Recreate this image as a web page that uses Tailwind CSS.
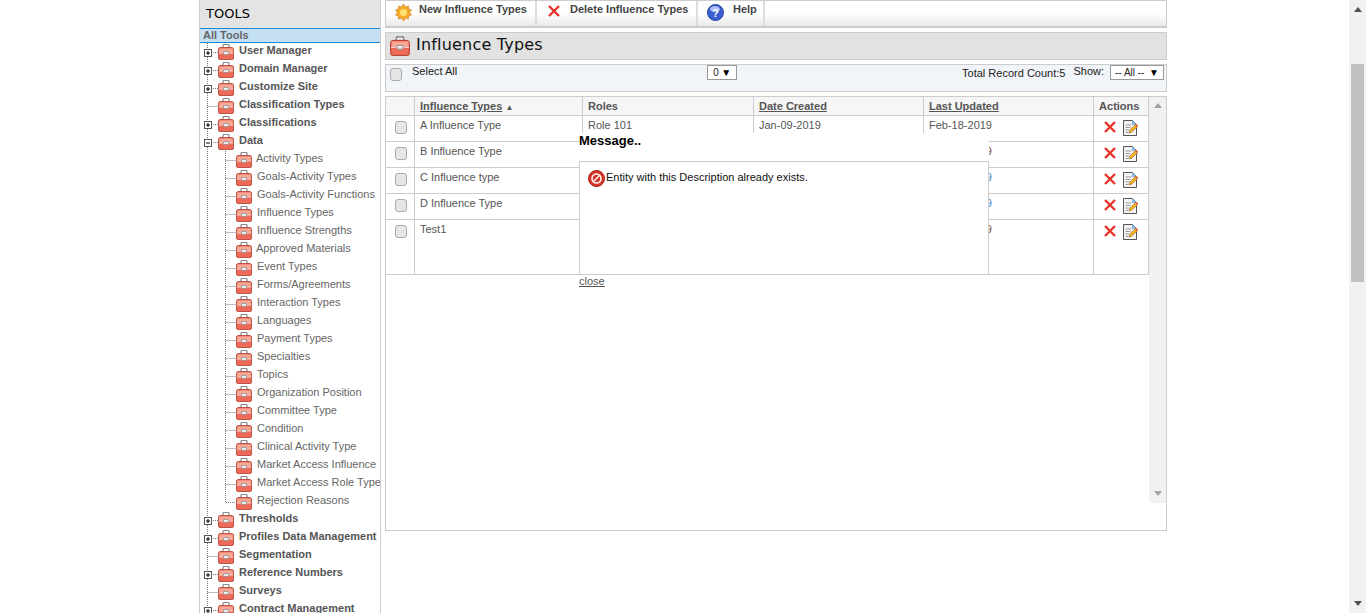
<!DOCTYPE html>
<html>
<head>
<meta charset="utf-8">
<title>Influence Types</title>
<script src="https://cdn.jsdelivr.net/npm/@tailwindcss/browser@4"></script>
</head>
<body class="h-[613px] overflow-hidden bg-white font-['Liberation_Sans',Arial,sans-serif] text-[11px] text-[#555]">

<!-- shared icons -->
<svg class="hidden">
  <symbol id="toolbox" viewBox="0 0 16 16">
    <path d="M5 4V1.500q0-1 1-1h4q1 0 1 1V4" fill="none" stroke="#8a8a8a" stroke-width="1.200"/>
    <path d="M2 3.500h12q1 0 1.500 1.500v9q0 1.500-1.500 1.500H2q-1.500 0-1.500-1.500V5Q1 3.500 2 3.500z" fill="#ee6a58" stroke="#b03a2e" stroke-width=".8"/>
    <path d="M1.200 4.500h13.600v4H1.200z" fill="#f9a898"/>
    <path d="M.8 9h14.400" stroke="#fcd9cf"/>
    <rect x="5.500" y="7.500" width="5" height="3" rx=".5" fill="#ededed" stroke="#888" stroke-width=".7"/>
  </symbol>
  <symbol id="cross" viewBox="0 0 14 14">
    <path d="M2 2l10 10M12 2L2 12" stroke="#e8332a" stroke-width="2.400" fill="none"/>
  </symbol>
  <symbol id="edit" viewBox="0 0 16 16">
    <path d="M1.500 .5h9l4 4v11h-13z" fill="#f4f4f4" stroke="#555"/>
    <path d="M10.500 .5v4h4z" fill="#8fc1ea" stroke="#5c92c4" stroke-width=".6"/>
    <path d="M3.500 5h6M3.500 7.500h5M3.500 10h4M3.500 12.500h3" stroke="#999"/>
    <path d="M7 13l1-3 6-6 2 2-6 6z" fill="#f0b429" stroke="#a06a10" stroke-width=".6"/>
    <path d="M13 5l2 2 1-1.200-2-2z" fill="#e2604c"/>
  </symbol>
  <symbol id="plus" viewBox="0 0 18 18">
    <path d="M7.500 0v18M11 9.500h7" stroke="#777" stroke-dasharray="1 1" fill="none"/>
    <rect x="4.500" y="6.500" width="7" height="7" fill="#fff" stroke="#555"/>
    <path d="M6 10h4M8 8v4" stroke="#000"/>
  </symbol>
  <symbol id="minus" viewBox="0 0 18 18">
    <path d="M7.500 0v18M11 9.500h7" stroke="#777" stroke-dasharray="1 1" fill="none"/>
    <rect x="4.500" y="6.500" width="7" height="7" fill="#fff" stroke="#555"/>
    <path d="M6 10h4" stroke="#000"/>
  </symbol>
  <symbol id="tee" viewBox="0 0 18 18">
    <path d="M7.500 0v18M7.500 9.500h10.500" stroke="#777" stroke-dasharray="1 1" fill="none"/>
  </symbol>
  <symbol id="bar" viewBox="0 0 18 18">
    <path d="M7.500 0v18" stroke="#777" stroke-dasharray="1 1" fill="none"/>
  </symbol>
  <symbol id="last" viewBox="0 0 18 18">
    <path d="M7.500 0v9.500h10.500" stroke="#777" stroke-dasharray="1 1" fill="none"/>
  </symbol>
  <symbol id="up" viewBox="0 0 8 5"><path d="M4 0l4 5H0z" fill="currentColor"/></symbol>
  <symbol id="down" viewBox="0 0 8 5"><path d="M0 0h8L4 5z" fill="currentColor"/></symbol>
</svg>

<div class="flex h-full pl-[199px]">

  <!-- tools tree -->
  <aside class="h-full w-[182px] shrink-0 overflow-hidden border-x border-[#ccc]">
    <div class="flex h-[28px] items-center bg-[#e4e4e4] pl-[6px] font-['DejaVu_Sans',sans-serif] text-[13px] text-black">TOOLS</div>
    <div class="flex h-[15px] items-center border-y border-[#1c8ad6] bg-[#c5dff3] pl-[3px] font-bold text-[#666]">All Tools</div>

    <ul class="font-bold">
      <li class="flex h-[18px]"><svg class="h-[18px] w-[18px]"><use href="#plus"/></svg><svg class="mt-[1px] h-[16px] w-[16px]"><use href="#toolbox"/></svg><span class="mt-[-1px] ml-[5px] leading-[16px]">User Manager</span></li>
      <li class="flex h-[18px]"><svg class="h-[18px] w-[18px]"><use href="#plus"/></svg><svg class="mt-[1px] h-[16px] w-[16px]"><use href="#toolbox"/></svg><span class="mt-[-1px] ml-[5px] leading-[16px]">Domain Manager</span></li>
      <li class="flex h-[18px]"><svg class="h-[18px] w-[18px]"><use href="#plus"/></svg><svg class="mt-[1px] h-[16px] w-[16px]"><use href="#toolbox"/></svg><span class="mt-[-1px] ml-[5px] leading-[16px]">Customize Site</span></li>
      <li class="flex h-[18px]"><svg class="h-[18px] w-[18px]"><use href="#tee"/></svg><svg class="mt-[1px] h-[16px] w-[16px]"><use href="#toolbox"/></svg><span class="mt-[-1px] ml-[5px] leading-[16px]">Classification Types</span></li>
      <li class="flex h-[18px]"><svg class="h-[18px] w-[18px]"><use href="#plus"/></svg><svg class="mt-[1px] h-[16px] w-[16px]"><use href="#toolbox"/></svg><span class="mt-[-1px] ml-[5px] leading-[16px]">Classifications</span></li>
      <li class="flex h-[18px]"><svg class="h-[18px] w-[18px]"><use href="#minus"/></svg><svg class="mt-[1px] h-[16px] w-[16px]"><use href="#toolbox"/></svg><span class="mt-[-1px] ml-[5px] leading-[16px]">Data</span></li>

      <li class="flex h-[18px] w-max font-normal text-[#666]"><svg class="h-[18px] w-[18px]"><use href="#bar"/></svg><svg class="h-[18px] w-[18px]"><use href="#tee"/></svg><svg class="mt-[1px] h-[16px] w-[16px]"><use href="#toolbox"/></svg><span class="mt-[-1px] ml-[4px] leading-[16px]">Activity Types</span></li>
      <li class="flex h-[18px] w-max font-normal text-[#666]"><svg class="h-[18px] w-[18px]"><use href="#bar"/></svg><svg class="h-[18px] w-[18px]"><use href="#tee"/></svg><svg class="mt-[1px] h-[16px] w-[16px]"><use href="#toolbox"/></svg><span class="mt-[-1px] ml-[5px] leading-[16px]">Goals-Activity Types</span></li>
      <li class="flex h-[18px] w-max font-normal text-[#666]"><svg class="h-[18px] w-[18px]"><use href="#bar"/></svg><svg class="h-[18px] w-[18px]"><use href="#tee"/></svg><svg class="mt-[1px] h-[16px] w-[16px]"><use href="#toolbox"/></svg><span class="mt-[-1px] ml-[5px] leading-[16px]">Goals-Activity Functions</span></li>
      <li class="flex h-[18px] w-max font-normal text-[#666]"><svg class="h-[18px] w-[18px]"><use href="#bar"/></svg><svg class="h-[18px] w-[18px]"><use href="#tee"/></svg><svg class="mt-[1px] h-[16px] w-[16px]"><use href="#toolbox"/></svg><span class="mt-[-1px] ml-[5px] leading-[16px]">Influence Types</span></li>
      <li class="flex h-[18px] w-max font-normal text-[#666]"><svg class="h-[18px] w-[18px]"><use href="#bar"/></svg><svg class="h-[18px] w-[18px]"><use href="#tee"/></svg><svg class="mt-[1px] h-[16px] w-[16px]"><use href="#toolbox"/></svg><span class="mt-[-1px] ml-[5px] leading-[16px]">Influence Strengths</span></li>
      <li class="flex h-[18px] w-max font-normal text-[#666]"><svg class="h-[18px] w-[18px]"><use href="#bar"/></svg><svg class="h-[18px] w-[18px]"><use href="#tee"/></svg><svg class="mt-[1px] h-[16px] w-[16px]"><use href="#toolbox"/></svg><span class="mt-[-1px] ml-[4px] leading-[16px]">Approved Materials</span></li>
      <li class="flex h-[18px] w-max font-normal text-[#666]"><svg class="h-[18px] w-[18px]"><use href="#bar"/></svg><svg class="h-[18px] w-[18px]"><use href="#tee"/></svg><svg class="mt-[1px] h-[16px] w-[16px]"><use href="#toolbox"/></svg><span class="mt-[-1px] ml-[5px] leading-[16px]">Event Types</span></li>
      <li class="flex h-[18px] w-max font-normal text-[#666]"><svg class="h-[18px] w-[18px]"><use href="#bar"/></svg><svg class="h-[18px] w-[18px]"><use href="#tee"/></svg><svg class="mt-[1px] h-[16px] w-[16px]"><use href="#toolbox"/></svg><span class="mt-[-1px] ml-[5px] leading-[16px]">Forms/Agreements</span></li>
      <li class="flex h-[18px] w-max font-normal text-[#666]"><svg class="h-[18px] w-[18px]"><use href="#bar"/></svg><svg class="h-[18px] w-[18px]"><use href="#tee"/></svg><svg class="mt-[1px] h-[16px] w-[16px]"><use href="#toolbox"/></svg><span class="mt-[-1px] ml-[5px] leading-[16px]">Interaction Types</span></li>
      <li class="flex h-[18px] w-max font-normal text-[#666]"><svg class="h-[18px] w-[18px]"><use href="#bar"/></svg><svg class="h-[18px] w-[18px]"><use href="#tee"/></svg><svg class="mt-[1px] h-[16px] w-[16px]"><use href="#toolbox"/></svg><span class="mt-[-1px] ml-[5px] leading-[16px]">Languages</span></li>
      <li class="flex h-[18px] w-max font-normal text-[#666]"><svg class="h-[18px] w-[18px]"><use href="#bar"/></svg><svg class="h-[18px] w-[18px]"><use href="#tee"/></svg><svg class="mt-[1px] h-[16px] w-[16px]"><use href="#toolbox"/></svg><span class="mt-[-1px] ml-[5px] leading-[16px]">Payment Types</span></li>
      <li class="flex h-[18px] w-max font-normal text-[#666]"><svg class="h-[18px] w-[18px]"><use href="#bar"/></svg><svg class="h-[18px] w-[18px]"><use href="#tee"/></svg><svg class="mt-[1px] h-[16px] w-[16px]"><use href="#toolbox"/></svg><span class="mt-[-1px] ml-[5px] leading-[16px]">Specialties</span></li>
      <li class="flex h-[18px] w-max font-normal text-[#666]"><svg class="h-[18px] w-[18px]"><use href="#bar"/></svg><svg class="h-[18px] w-[18px]"><use href="#tee"/></svg><svg class="mt-[1px] h-[16px] w-[16px]"><use href="#toolbox"/></svg><span class="mt-[-1px] ml-[5px] leading-[16px]">Topics</span></li>
      <li class="flex h-[18px] w-max font-normal text-[#666]"><svg class="h-[18px] w-[18px]"><use href="#bar"/></svg><svg class="h-[18px] w-[18px]"><use href="#tee"/></svg><svg class="mt-[1px] h-[16px] w-[16px]"><use href="#toolbox"/></svg><span class="mt-[-1px] ml-[5px] leading-[16px]">Organization Position</span></li>
      <li class="flex h-[18px] w-max font-normal text-[#666]"><svg class="h-[18px] w-[18px]"><use href="#bar"/></svg><svg class="h-[18px] w-[18px]"><use href="#tee"/></svg><svg class="mt-[1px] h-[16px] w-[16px]"><use href="#toolbox"/></svg><span class="mt-[-1px] ml-[5px] leading-[16px]">Committee Type</span></li>
      <li class="flex h-[18px] w-max font-normal text-[#666]"><svg class="h-[18px] w-[18px]"><use href="#bar"/></svg><svg class="h-[18px] w-[18px]"><use href="#tee"/></svg><svg class="mt-[1px] h-[16px] w-[16px]"><use href="#toolbox"/></svg><span class="mt-[-1px] ml-[5px] leading-[16px]">Condition</span></li>
      <li class="flex h-[18px] w-max font-normal text-[#666]"><svg class="h-[18px] w-[18px]"><use href="#bar"/></svg><svg class="h-[18px] w-[18px]"><use href="#tee"/></svg><svg class="mt-[1px] h-[16px] w-[16px]"><use href="#toolbox"/></svg><span class="mt-[-1px] ml-[5px] leading-[16px]">Clinical Activity Type</span></li>
      <li class="flex h-[18px] w-max font-normal text-[#666]"><svg class="h-[18px] w-[18px]"><use href="#bar"/></svg><svg class="h-[18px] w-[18px]"><use href="#tee"/></svg><svg class="mt-[1px] h-[16px] w-[16px]"><use href="#toolbox"/></svg><span class="mt-[-1px] ml-[5px] leading-[16px]">Market Access Influence</span></li>
      <li class="flex h-[18px] w-max font-normal text-[#666]"><svg class="h-[18px] w-[18px]"><use href="#bar"/></svg><svg class="h-[18px] w-[18px]"><use href="#tee"/></svg><svg class="mt-[1px] h-[16px] w-[16px]"><use href="#toolbox"/></svg><span class="mt-[-1px] ml-[5px] leading-[16px]">Market Access Role Type</span></li>
      <li class="flex h-[18px] w-max font-normal text-[#666]"><svg class="h-[18px] w-[18px]"><use href="#bar"/></svg><svg class="h-[18px] w-[18px]"><use href="#last"/></svg><svg class="mt-[1px] h-[16px] w-[16px]"><use href="#toolbox"/></svg><span class="mt-[-1px] ml-[5px] leading-[16px]">Rejection Reasons</span></li>

      <li class="flex h-[18px]"><svg class="h-[18px] w-[18px]"><use href="#plus"/></svg><svg class="mt-[1px] h-[16px] w-[16px]"><use href="#toolbox"/></svg><span class="mt-[-1px] ml-[5px] leading-[16px]">Thresholds</span></li>
      <li class="flex h-[18px]"><svg class="h-[18px] w-[18px]"><use href="#plus"/></svg><svg class="mt-[1px] h-[16px] w-[16px]"><use href="#toolbox"/></svg><span class="mt-[-1px] ml-[5px] leading-[16px]">Profiles Data Management</span></li>
      <li class="flex h-[18px]"><svg class="h-[18px] w-[18px]"><use href="#tee"/></svg><svg class="mt-[1px] h-[16px] w-[16px]"><use href="#toolbox"/></svg><span class="mt-[-1px] ml-[5px] leading-[16px]">Segmentation</span></li>
      <li class="flex h-[18px]"><svg class="h-[18px] w-[18px]"><use href="#plus"/></svg><svg class="mt-[1px] h-[16px] w-[16px]"><use href="#toolbox"/></svg><span class="mt-[-1px] ml-[5px] leading-[16px]">Reference Numbers</span></li>
      <li class="flex h-[18px]"><svg class="h-[18px] w-[18px]"><use href="#tee"/></svg><svg class="mt-[1px] h-[16px] w-[16px]"><use href="#toolbox"/></svg><span class="mt-[-1px] ml-[5px] leading-[16px]">Surveys</span></li>
      <li class="flex h-[18px]"><svg class="h-[18px] w-[18px]"><use href="#plus"/></svg><svg class="mt-[1px] h-[16px] w-[16px]"><use href="#toolbox"/></svg><span class="mt-[-1px] ml-[5px] leading-[16px]">Contract Management</span></li>
    </ul>
  </aside>

  <!-- main panel -->
  <main class="relative ml-[4px] flex h-full w-[782px] shrink-0 flex-col gap-[4px]">
    <div class="flex h-[28px] border-x border-t border-b-2 border-[#ccc] bg-gradient-to-b from-white from-50% to-[#e9e9e9] font-bold">
      <button class="flex w-[151px] border-r-2 border-[#ddd] pt-[2px] pl-[9px] text-[#444]">
        <svg class="mt-[1px] h-[17px] w-[17px]" viewBox="0 0 17 17"><path d="M8.500 0l2 3 3-1 0 3 3 1-2 2.500 2 2.500-3 1 0 3-3-1-2 3-2-3-3 1 0-3-3-1 2-2.500-2-2.500 3-1 0-3 3 1z" fill="#f7a928" stroke="#c9781a" stroke-width=".6"/><circle cx="8.500" cy="8.500" r="3.500" fill="#ffdf70"/></svg>
        <span class="ml-[7px] leading-[13px]">New Influence Types</span>
      </button>
      <button class="flex w-[161px] border-r-2 border-[#ddd] pt-[2px] pl-[10px] text-[#444]">
        <svg class="mt-[1px] h-[14px] w-[14px]"><use href="#cross"/></svg>
        <span class="ml-[9px] leading-[13px]">Delete Influence Types</span>
      </button>
      <button class="flex w-[67px] border-r-2 border-[#ddd] pt-[2px] pl-[9px] text-[#444]">
        <svg class="mt-[1px] h-[17px] w-[17px]" viewBox="0 0 17 17"><circle cx="8.500" cy="8.500" r="8" fill="#3b5fd0" stroke="#2a3f96"/><ellipse cx="8" cy="5" rx="5" ry="3" fill="#a9bdf2"/><text x="8.500" y="13" text-anchor="middle" font-size="11" font-weight="bold" fill="#fff">?</text></svg>
        <span class="ml-[9px] leading-[13px]">Help</span>
      </button>
    </div>

    <div class="flex h-[28px] items-center border border-[#ccc] bg-[#e2e2e2] pl-[4px]">
      <svg class="h-[20px] w-[20px]"><use href="#toolbox"/></svg>
      <h1 class="mb-[2px] ml-[6px] font-['DejaVu_Sans',sans-serif] text-[16px] tracking-[0.2px] text-[#111]">Influence Types</h1>
    </div>

    <div class="flex h-[28px] border border-[#ccc] bg-[#f1f4f9] text-[#222]">
      <span class="mt-[3px] ml-[4px] h-[13px] w-[12px] rounded-[3px] border border-[#aaa] bg-[#e6e6e6]"></span>
      <span class="ml-[10px] leading-[13px]">Select All</span>
      <span class="ml-[250px] flex h-[15px] w-[30px] items-center justify-between border border-[#999] bg-white px-[5px] text-[10px]">0<span class="text-[10px] text-black">▼</span></span>
      <span class="mt-[2px] ml-auto leading-[13px]">Total Record Count:5</span>
      <span class="ml-[8px] leading-[13px]">Show:</span>
      <span class="mr-[2px] ml-[6px] flex h-[15px] w-[54px] items-center justify-between border border-[#999] bg-white px-[4px] text-[10px]">-- All --<span class="text-[10px] text-black">▼</span></span>
    </div>

    <div class="flex h-[435px] border border-[#ccc]">
      <table class="h-[178px] w-[763px] table-fixed border-collapse self-start text-left">
        <thead class="bg-[#f6f6f6] font-bold">
          <tr class="h-[18px] border-b border-[#ccc]">
            <th class="w-[28px] border-r border-[#ccc]"></th>
            <th class="w-[168px] border-r border-[#ccc] pl-[5.5px]"><span class="underline">Influence Types</span> <span class="text-[8px]">▲</span></th>
            <th class="w-[171px] border-r border-[#ccc] pl-[5.5px]">Roles</th>
            <th class="w-[170px] border-r border-[#ccc] pl-[5.5px] underline">Date Created</th>
            <th class="w-[170px] border-r border-[#ccc] pl-[5.5px] underline">Last Updated</th>
            <th class="border-r border-[#ccc] pr-[3px] text-center">Actions</th>
          </tr>
        </thead>
        <tbody>
          <tr class="h-[26px] border-b border-[#ccc] align-top">
            <td class="border-r border-[#ccc]"><span class="mt-[5px] ml-[9px] block h-[13px] w-[12px] rounded-[3px] border border-[#aaa] bg-[#e6e6e6]"></span></td>
            <td class="border-r border-[#ccc] pt-[1px] pl-[5.5px]">A Influence Type</td>
            <td class="border-r border-[#ccc] pt-[1px] pl-[5.5px]">Role 101</td>
            <td class="border-r border-[#ccc] pt-[1px] pl-[5.5px]">Jan-09-2019</td>
            <td class="border-r border-[#ccc] pt-[1px] pl-[5.5px]">Feb-18-2019</td>
            <td class="border-r border-[#ccc]"><span class="mt-[4px] ml-[9px] flex gap-[5px]"><svg class="h-[14px] w-[14px]"><use href="#cross"/></svg><svg class="h-[16px] w-[16px]"><use href="#edit"/></svg></span></td>
          </tr>
          <tr class="h-[26px] border-b border-[#ccc] align-top">
            <td class="border-r border-[#ccc]"><span class="mt-[5px] ml-[9px] block h-[13px] w-[12px] rounded-[3px] border border-[#aaa] bg-[#e6e6e6]"></span></td>
            <td class="border-r border-[#ccc] pt-[1px] pl-[5.5px]">B Influence Type</td>
            <td class="border-r border-[#ccc] pt-[1px] pl-[5.5px]"></td>
            <td class="border-r border-[#ccc] pt-[1px] pl-[5.5px]"></td>
            <td class="border-r border-[#ccc] pt-[1px] pl-[5.5px] text-[#7a4a2a]">Feb-18-2019</td>
            <td class="border-r border-[#ccc]"><span class="mt-[4px] ml-[9px] flex gap-[5px]"><svg class="h-[14px] w-[14px]"><use href="#cross"/></svg><svg class="h-[16px] w-[16px]"><use href="#edit"/></svg></span></td>
          </tr>
          <tr class="h-[26px] border-b border-[#ccc] align-top">
            <td class="border-r border-[#ccc]"><span class="mt-[5px] ml-[9px] block h-[13px] w-[12px] rounded-[3px] border border-[#aaa] bg-[#e6e6e6]"></span></td>
            <td class="border-r border-[#ccc] pt-[1px] pl-[5.5px]">C Influence type</td>
            <td class="border-r border-[#ccc] pt-[1px] pl-[5.5px]"></td>
            <td class="border-r border-[#ccc] pt-[1px] pl-[5.5px]"></td>
            <td class="border-r border-[#ccc] pt-[1px] pl-[5.5px] text-[#3b82c4]">Feb-18-2019</td>
            <td class="border-r border-[#ccc]"><span class="mt-[4px] ml-[9px] flex gap-[5px]"><svg class="h-[14px] w-[14px]"><use href="#cross"/></svg><svg class="h-[16px] w-[16px]"><use href="#edit"/></svg></span></td>
          </tr>
          <tr class="h-[26px] border-b border-[#ccc] align-top">
            <td class="border-r border-[#ccc]"><span class="mt-[5px] ml-[9px] block h-[13px] w-[12px] rounded-[3px] border border-[#aaa] bg-[#e6e6e6]"></span></td>
            <td class="border-r border-[#ccc] pt-[1px] pl-[5.5px]">D Influence Type</td>
            <td class="border-r border-[#ccc] pt-[1px] pl-[5.5px]"></td>
            <td class="border-r border-[#ccc] pt-[1px] pl-[5.5px]"></td>
            <td class="border-r border-[#ccc] pt-[1px] pl-[5.5px] text-[#3b82c4]">Feb-18-2019</td>
            <td class="border-r border-[#ccc]"><span class="mt-[4px] ml-[9px] flex gap-[5px]"><svg class="h-[14px] w-[14px]"><use href="#cross"/></svg><svg class="h-[16px] w-[16px]"><use href="#edit"/></svg></span></td>
          </tr>
          <tr class="h-[55px] border-b border-[#ccc] align-top">
            <td class="border-r border-[#ccc]"><span class="mt-[5px] ml-[9px] block h-[13px] w-[12px] rounded-[3px] border border-[#aaa] bg-[#e6e6e6]"></span></td>
            <td class="border-r border-[#ccc] pt-[1px] pl-[5.5px]">Test1</td>
            <td class="border-r border-[#ccc] pt-[1px] pl-[5.5px]"></td>
            <td class="border-r border-[#ccc] pt-[1px] pl-[5.5px]"></td>
            <td class="border-r border-[#ccc] pt-[1px] pl-[5.5px] text-[#7a4a2a]">Feb-18-2019</td>
            <td class="border-r border-[#ccc]"><span class="mt-[4px] ml-[9px] flex gap-[5px]"><svg class="h-[14px] w-[14px]"><use href="#cross"/></svg><svg class="h-[16px] w-[16px]"><use href="#edit"/></svg></span></td>
          </tr>
        </tbody>
      </table>
      <div class="flex h-[406px] w-[17px] flex-col items-center justify-between bg-[#f1f1f1] pt-[6px] pb-[7px] text-[#a3a3a3]">
        <svg class="h-[5px] w-[8px]"><use href="#up"/></svg>
        <svg class="h-[5px] w-[8px]"><use href="#down"/></svg>
      </div>
    </div>

    <!-- message popup -->
    <div class="absolute top-[133px] left-[194px] w-[410px] text-[#111]">
      <div class="h-[28px] bg-white text-[13px] leading-[16px] font-bold text-black">Message..</div>
      <div class="flex h-[114px] items-start border border-[#ccc] bg-white pt-[8px] pl-[8px]">
        <svg class="h-[17px] w-[17px] shrink-0" viewBox="0 0 17 17"><circle cx="8.500" cy="8.500" r="8" fill="#d8352a" stroke="#a82018"/><circle cx="8.500" cy="8.500" r="4.500" fill="none" stroke="#fff" stroke-width="1.500"/><path d="M5.500 11.500l6-6" stroke="#fff" stroke-width="1.500"/></svg>
        <span class="ml-[1px] leading-[14px]">Entity with this Description already exists.</span>
      </div>
      <a class="mt-[-2px] block text-[#555] underline">close</a>
    </div>
  </main>

  <!-- page scrollbar -->
  <div class="ml-auto flex h-full w-[17px] shrink-0 flex-col items-center justify-between bg-[#f1f1f1] pt-[7px] pb-[7px] text-[#505050]">
    <svg class="h-[5px] w-[8px]"><use href="#up"/></svg>
    <svg class="h-[5px] w-[8px]"><use href="#down"/></svg>
  </div>
</div>
<div class="absolute top-[64px] right-[2px] h-[218px] w-[13px] bg-[#c1c1c1]"></div>
</body>
</html>
